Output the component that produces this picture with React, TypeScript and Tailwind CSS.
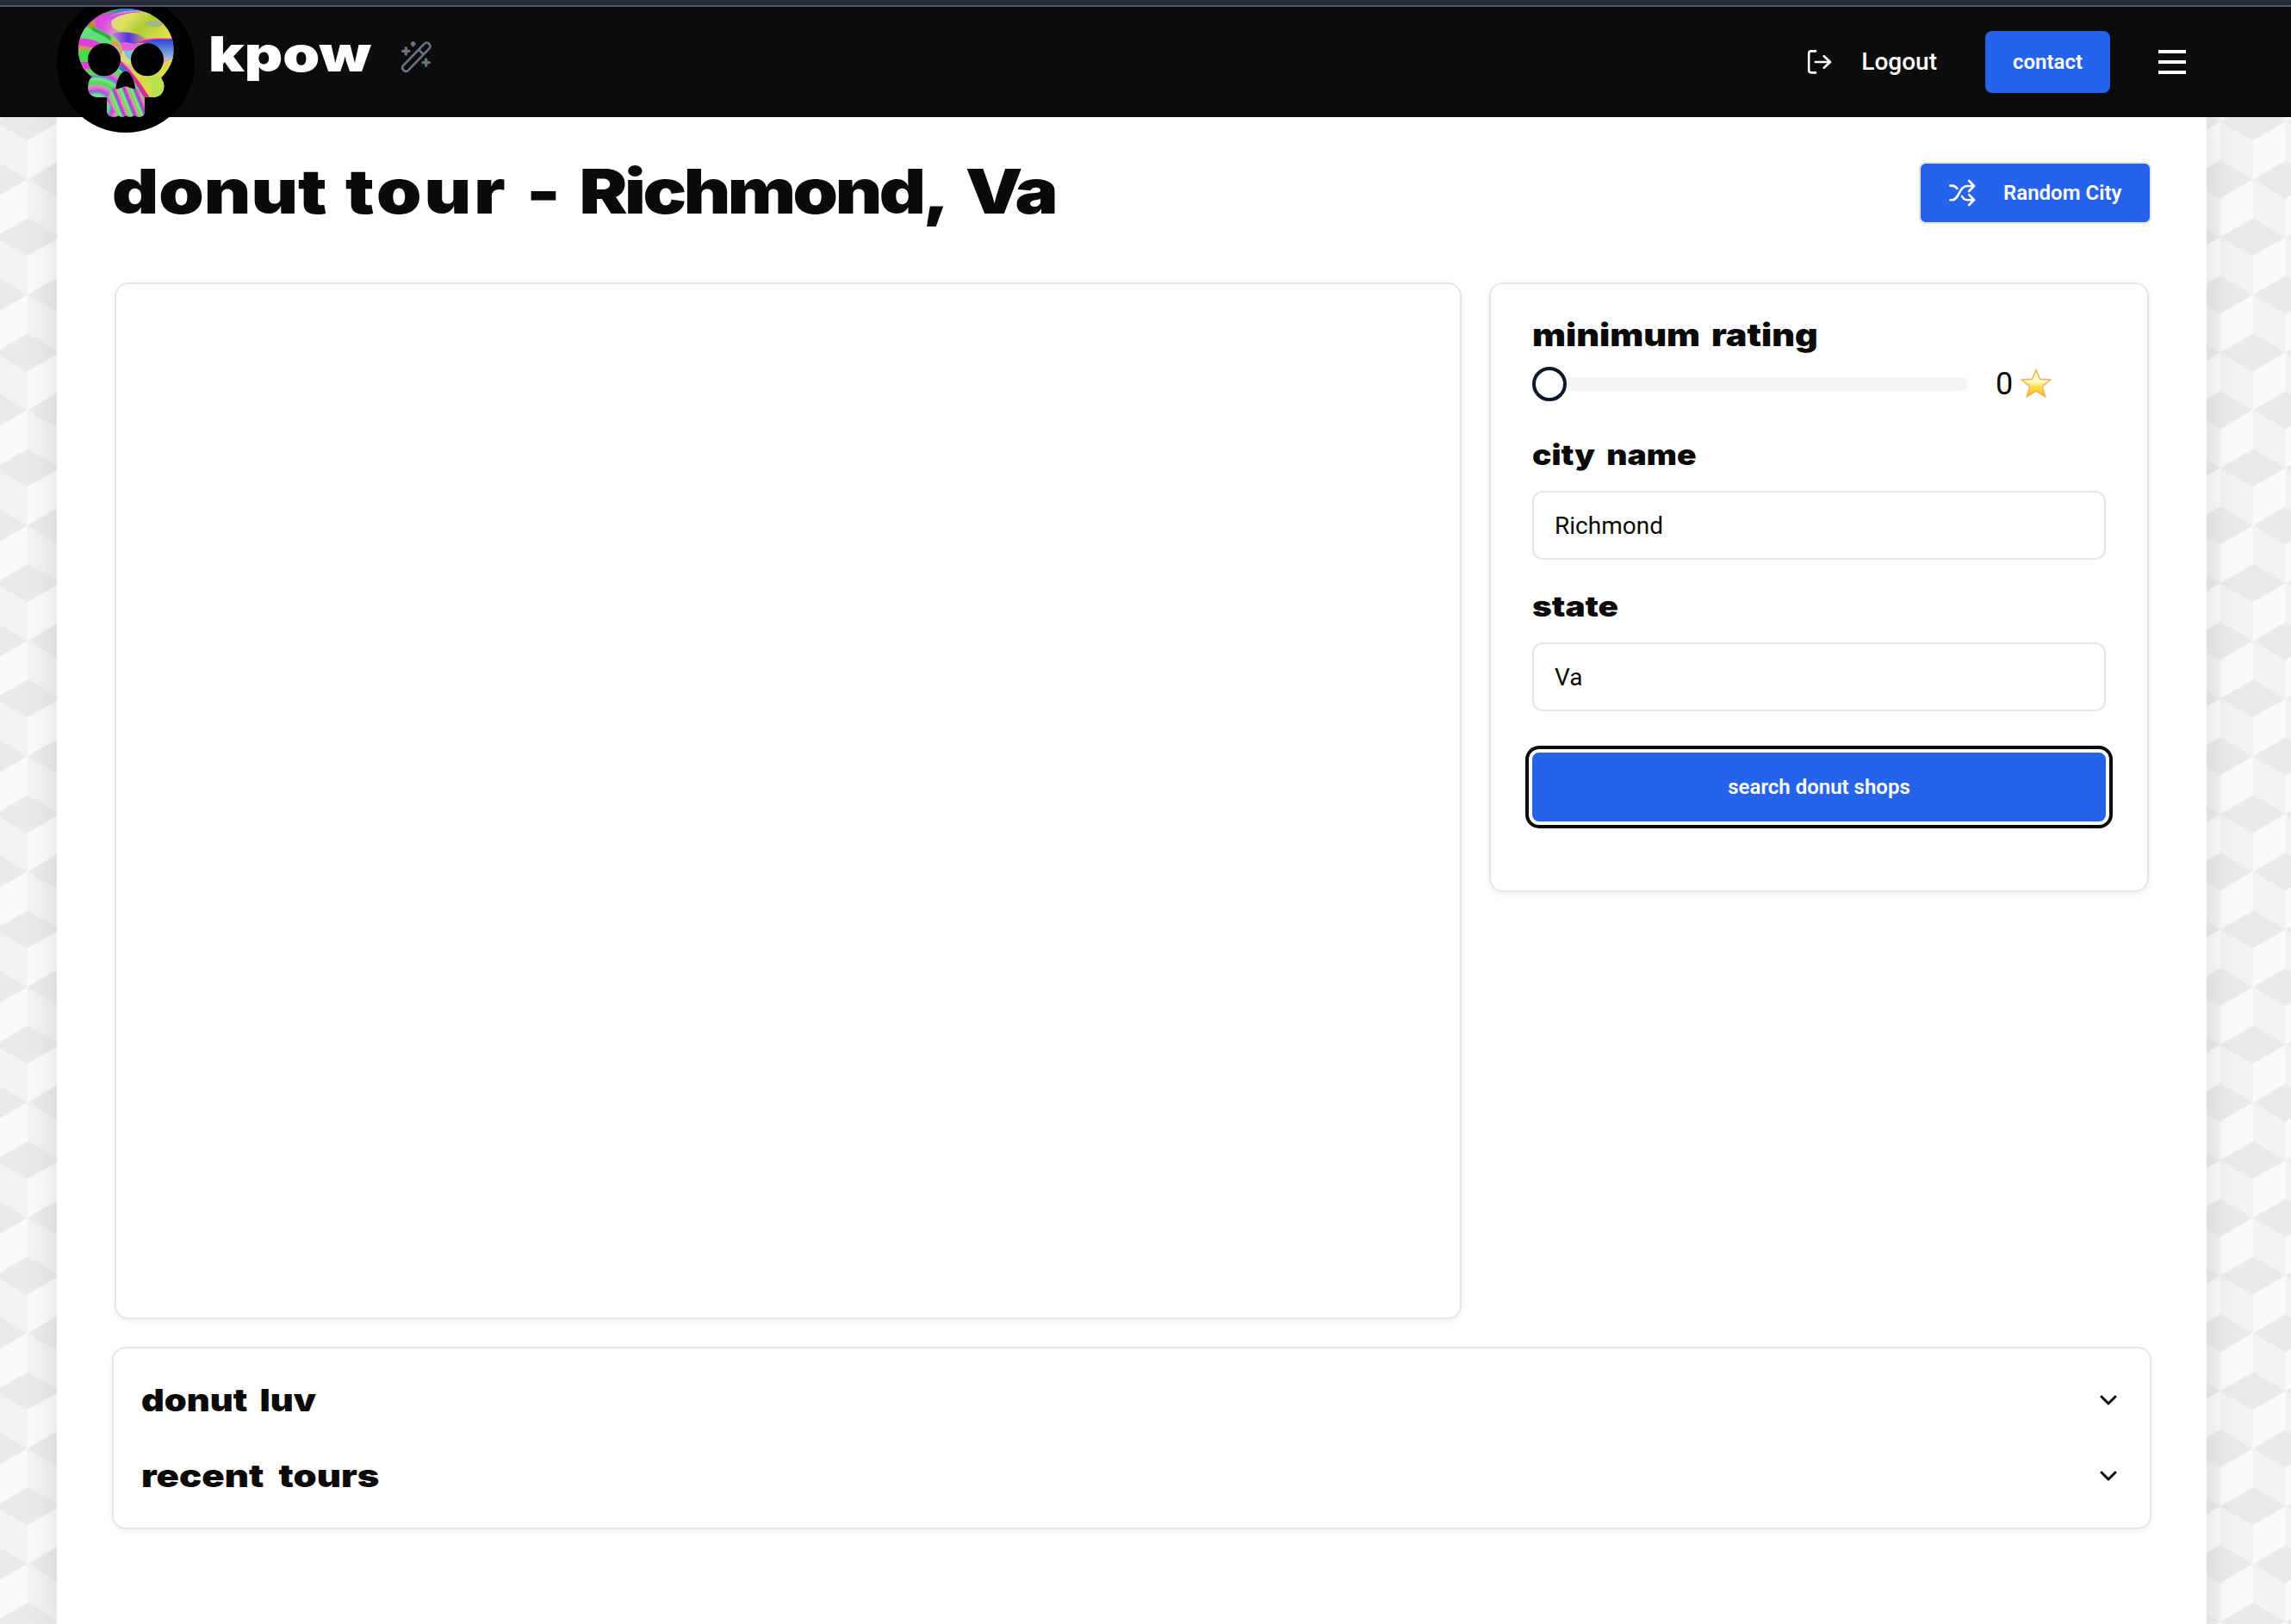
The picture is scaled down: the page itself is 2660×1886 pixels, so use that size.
import type { ReactNode } from "react";
import { ChevronDown } from "lucide-react";

function CubeBackground() {
  return (
    <svg className="absolute inset-0 h-full w-full" aria-hidden="true">
      <defs>
        <pattern id="cubes" x="69.8" y="74.3" width="76" height="134" patternUnits="userSpaceOnUse">
          <rect width="76" height="134" fill="#f2f2f2" />
          <path d="M38 45L76 67L38 89L0 67Z" fill="#eaeaea" />
          <path d="M0 0H38L0 22Z M76 0H38L76 22Z M0 134H38L0 112Z M76 134H38L76 112Z" fill="#eaeaea" />
          <path d="M0 22L38 0V45L0 67Z" fill="#fafafa" />
          <path d="M38 89L76 67V112L38 134Z" fill="#fafafa" />
        </pattern>
      </defs>
      <rect width="100%" height="100%" fill="url(#cubes)" />
    </svg>
  );
}

function SkullLogo() {
  return (
    <svg className="absolute left-0 top-0" width="160" height="146" viewBox="18 24 480 438" aria-label="kpow logo">
      <defs>
        <clipPath id="skull">
          <path d="M258 30C350 30 425 92 425 172C425 215 407 245 381 271C384 280 391 286 391 300C391 324 376 338 356 338H323V390C323 401 316 407 306 407C298 407 293 404 288 401C281 408 266 409 259 402C250 409 240 408 234 402C227 407 220 407 212 407C200 407 193 399 193 388V338H158C138 338 127 322 127 305C127 288 131 276 141 268C112 250 93 218 93 172C93 92 166 30 258 30Z" />
        </clipPath>
        <linearGradient id="lime" x1="0" y1="0" x2="1" y2="0.4">
          <stop offset="0" stopColor="#e9c0b8" />
          <stop offset=".3" stopColor="#dfe060" />
          <stop offset=".6" stopColor="#aecb34" />
          <stop offset="1" stopColor="#dfe04a" />
        </linearGradient>
        <linearGradient id="magenta" gradientUnits="userSpaceOnUse" x1="140" y1="60" x2="230" y2="110">
          <stop offset="0" stopColor="#e33ade" />
          <stop offset=".5" stopColor="#dd50dc" />
          <stop offset="1" stopColor="#d8a0c8" />
        </linearGradient>
        <linearGradient id="sky" x1="0" y1="0" x2="0" y2="1">
          <stop offset="0" stopColor="#2a49dc" />
          <stop offset="1" stopColor="#9cc4d8" />
        </linearGradient>
        <linearGradient id="pool" x1="0" y1="0" x2="1" y2="0">
          <stop offset="0" stopColor="#d88ad0" />
          <stop offset=".5" stopColor="#5432e2" />
          <stop offset="1" stopColor="#cfa080" />
        </linearGradient>
        <linearGradient id="stripes" gradientUnits="userSpaceOnUse" x1="200" y1="360" x2="232" y2="347" spreadMethod="repeat">
          <stop offset="0" stopColor="#d936c6" />
          <stop offset=".3" stopColor="#d4a5b8" />
          <stop offset=".45" stopColor="#58e34a" />
          <stop offset=".65" stopColor="#b8dc7a" />
          <stop offset=".8" stopColor="#2fa6e0" />
          <stop offset="1" stopColor="#e0249c" />
        </linearGradient>
        <radialGradient id="rings" gradientUnits="userSpaceOnUse" cx="155" cy="372" r="56" spreadMethod="repeat">
          <stop offset="0" stopColor="#d63ccb" />
          <stop offset=".3" stopColor="#c89ac8" />
          <stop offset=".5" stopColor="#42e048" />
          <stop offset=".75" stopColor="#8edd86" />
          <stop offset=".88" stopColor="#38b6cf" />
          <stop offset="1" stopColor="#e33ad6" />
        </radialGradient>
      </defs>
      <circle cx="258" cy="222" r="240" fill="#000" />
      <g clipPath="url(#skull)">
        <rect x="80" y="24" width="360" height="390" fill="url(#magenta)" />
        <path d="M90 90L190 45L320 24H200C130 40 100 70 90 120Z" fill="#3fae2c" />
        <path d="M180 58C240 36 290 34 340 42L330 24H260Z" fill="#2f7fe6" />
        <path d="M200 62C250 40 310 34 350 50L240 72Z" fill="#c44ee6" />
        <path d="M207 80C214 46 310 38 372 44L440 90V134C340 130 300 138 262 122C230 108 205 98 207 80Z" fill="url(#lime)" />
        <ellipse cx="358" cy="83" rx="28" ry="11" fill="#a3b785" />
        <path d="M85 130C100 92 125 88 150 95C175 110 206 115 212 150L180 165L85 135Z" fill="#5fe07a" />
        <path d="M120 92L150 68L154 88L135 100Z" fill="#b5942e" />
        <path d="M140 97C160 112 190 118 210 140" fill="none" stroke="#2fae3b" strokeWidth="12" />
        <path d="M85 134C120 130 170 142 190 165L85 172Z" fill="#e23edc" />
        <path d="M85 160C110 160 140 162 160 172L85 192Z" fill="#c69a58" />
        <path d="M85 180L140 174L125 216L95 214Z" fill="#3fe04b" />
        <path d="M205 118C240 105 300 112 330 136C300 160 262 158 240 150Z" fill="url(#pool)" />
        <path d="M240 150C262 140 280 158 310 152L280 176L246 178Z" fill="#dd62d8" />
        <path d="M300 150C330 128 380 136 430 134V150H300Z" fill="#e0298f" />
        <path d="M325 148C350 134 390 140 430 138V208C400 206 350 190 325 148Z" fill="url(#sky)" />
        <path d="M206 120C240 140 250 170 246 215L230 158L206 150Z" fill="#7fd860" />
        <path d="M214 138C240 155 252 175 246 215L236 168L208 152Z" fill="#e09a48" />
        <path d="M246 176L282 178L276 232L240 212Z" fill="#dfd97a" />
        <path d="M250 176L282 178L276 212L258 196Z" fill="#7cc4de" />
        <path d="M268 222C320 260 400 220 430 196V350H340C320 310 290 270 268 222Z" fill="#dcd84e" />
        <path d="M330 272C360 262 380 262 400 280V345H352C350 310 345 290 330 272Z" fill="#b8e34c" />
        <path d="M122 262C190 262 225 262 245 212L262 240L330 345V412H190V345H122Z" fill="url(#rings)" />
        <path d="M215 306C235 288 290 296 306 320L330 345V412H240L190 345Z" fill="url(#stripes)" />
        <path d="M240 212C290 260 310 290 342 340H322C300 300 270 255 240 225Z" fill="#dc2b8c" />
        <path d="M240 222L285 272L262 262L234 240Z" fill="#3670df" />
        <path d="M104 216H124L134 244L118 240Z" fill="#df3dd8" />
        <path d="M116 244L134 240L160 262H140Z" fill="#4be04b" />
      </g>
      <circle cx="183" cy="208" r="57" fill="#000" />
      <circle cx="333" cy="208" r="57" fill="#000" />
      <path d="M257 248C275 248 290 285 292 310C274 309 268 302 257 301C246 302 240 310 223 310C226 280 240 248 257 248Z" fill="#000" />
    </svg>
  );
}

function WandIcon() {
  return (
    <svg width="70" height="60" viewBox="0 0 210 180" fill="none" stroke="#6b7080" strokeWidth="8" strokeLinejoin="round" strokeLinecap="round">
      <rect x="36" y="78.5" width="127" height="24" rx="10" transform="rotate(-46 100 90)" />
      <path d="M108 65L124 81" />
      <path d="M64 59V81M53 70H75M134 99V121M123 110H145" strokeWidth="10" />
      <path d="M89 40L94 45L89 50L84 45Z" strokeWidth="9" />
    </svg>
  );
}

function LogoutIcon() {
  return (
    <svg width="32" height="32" viewBox="0 0 32 32" fill="none" stroke="#fff" strokeWidth="2.6" strokeLinecap="round" strokeLinejoin="round">
      <path d="M11 3.4H6C4.3 3.4 3.2 4.5 3.2 6V25.6C3.2 27.2 4.3 28.4 6 28.4H11" />
      <path d="M10.8 16H28M20.8 9.2L28 16L20.8 22.8" />
    </svg>
  );
}

function ShuffleIcon() {
  return (
    <svg width="32" height="32" viewBox="0 0 32 32" fill="none" stroke="#fff" strokeWidth="2.6" strokeLinecap="round" strokeLinejoin="round">
      <path d="M2.4 7.6H4.5C7 7.6 8.8 8.8 10.4 11" />
      <path d="M2.4 24.2H4.5C13 24.2 12.5 8 22 8H30" />
      <path d="M16 20C17.6 23 19.5 24.2 22 24.2H30" />
      <path d="M24.2 2L30 8L24.2 14M24.2 18.2L30 24.2L24.2 30" />
    </svg>
  );
}

function StarIcon() {
  return (
    <svg width="36" height="34" viewBox="0 0 36 34">
      <defs>
        <linearGradient id="gold" x1="0" y1="0" x2="0" y2="1">
          <stop offset="0" stopColor="#fff2a8" />
          <stop offset=".45" stopColor="#fffbc8" />
          <stop offset=".6" stopColor="#ffe45c" />
          <stop offset="1" stopColor="#f9ae05" />
        </linearGradient>
      </defs>
      <path d="M18 1L22.4 12.2L35 13L25.4 20.6L28.8 33L18 26.2L7.2 33L10.6 20.6L1 13L13.6 12.2Z" fill="url(#gold)" stroke="#efb25a" strokeWidth="1.4" strokeLinejoin="round" />
    </svg>
  );
}

const card = "rounded-2xl border-2 border-[#e5e5e5] bg-white shadow-[0_2px_6px_rgba(0,0,0,0.07)]";
const display = "inline-block origin-left whitespace-nowrap font-['Inter',sans-serif] font-black text-[#0c0a09]";

function Field({ label, value, className }: { label: ReactNode; value: string; className: string }) {
  return (
    <div className={className}>
      <label className="block h-8 pt-[3px]">{label}</label>
      <input
        className="mt-7 block h-20 w-full rounded-xl border-2 border-[#e5e5e5] bg-white px-6 text-[28px] text-[#0c0a09]"
        defaultValue={value}
      />
    </div>
  );
}

function Section({ children }: { children: ReactNode }) {
  return (
    <div className="flex h-[88px] items-center justify-between">
      <div>{children}</div>
      <ChevronDown size={32} strokeWidth={2.2} color="#000" />
    </div>
  );
}

export default function App() {
  return (
    <div className="relative h-[1886px] w-[2660px] overflow-hidden font-['Roboto',sans-serif]">
      <CubeBackground />
      <div className="relative flex h-full flex-col">
        <div className="h-2 shrink-0 border-b-2 border-[#50566b] bg-[#282c34]" />
        <header className="relative z-10 flex h-32 shrink-0 items-center bg-[#0c0c0c] pl-[66px] pr-[122px]">
          <div className="relative h-32 w-[176px]">
            <SkullLogo />
          </div>
          <div className="w-[208px] pb-[18px]">
            <span className="inline-block origin-left scale-x-[1.23] whitespace-nowrap font-['Inter',sans-serif] text-[56px] font-black leading-[60px] text-white">kpow</span>
          </div>
          <div className="pb-3">
            <WandIcon />
          </div>
          <nav className="ml-auto flex items-center gap-14">
            <a className="flex items-center gap-8 text-[28px] font-medium text-white">
              <LogoutIcon />
              Logout
            </a>
            <button className="h-[72px] w-[145px] rounded-lg bg-[#2563eb] text-2xl font-semibold text-white">contact</button>
            <button className="flex w-8 flex-col gap-2" aria-label="Menu">
              <span className="h-1 w-full bg-white" />
              <span className="h-1 w-full bg-white" />
              <span className="h-1 w-full bg-white" />
            </button>
          </nav>
        </header>
        <main className="ml-[66px] w-[2496px] flex-1 bg-white px-16 pt-[52px] shadow-[0_0_36px_rgba(0,0,0,0.11)]">
          <div className="flex h-[72px] items-start justify-between">
            <h1 className={display + " scale-x-[1.168] text-[72px] leading-[68px] [word-spacing:4px]"}>
              donut <span className="tracking-[2.6px]">tour</span> - <span className="tracking-[-3px]">Richmond,</span>{" "}
              <span className="tracking-[-3px]">Va</span>
            </h1>
            <button className="flex h-[72px] w-[270px] items-center gap-8 rounded-lg border-2 border-[#e5e5e5] bg-[#2563eb] pl-8 text-2xl font-semibold text-white">
              <ShuffleIcon />
              Random City
            </button>
          </div>
          <div className="mt-[68px] flex items-start gap-8 px-[3px]">
            <section className={card + " h-[1204px] w-[1564px]"} />
            <section className={card + " h-[708px] w-[766px] px-12 pt-[38px]"}>
              <h2 className="h-10 pt-px">
                <span className={display + " scale-x-[1.148] text-[36px] leading-[40px] [word-spacing:4px]"}>minimum rating</span>
              </h2>
              <div className="mt-[18px] flex h-10 items-center">
                <div className="flex h-4 w-[506px] items-center rounded-full bg-[#f5f5f4]">
                  <span className="h-10 w-10 rounded-full border-4 border-[#0f172a] bg-white" />
                </div>
                <span className="ml-8 text-[36px] leading-10 text-[#0c0a09]">0</span>
                <span className="ml-[9px] pb-0.5">
                  <StarIcon />
                </span>
              </div>
              <Field
                className="mt-11"
                label={<span className={display + " scale-x-[1.165] text-[32px] leading-8 [word-spacing:5px]"}>city name</span>}
                value="Richmond"
              />
              <Field
                className="mt-9"
                label={<span className={display + " scale-x-[1.21] text-[32px] leading-8"}>state</span>}
                value="Va"
              />
              <button className="mt-12 block h-20 w-full rounded-lg bg-[#2563eb] text-2xl font-semibold text-white ring-4 ring-[#0c0a09] ring-offset-4 ring-offset-white">
                search donut shops
              </button>
            </section>
          </div>
          <section className={card + " mt-8 px-8 py-4"}>
            <Section>
              <span className={display + " scale-x-[1.155] text-[36px] leading-[44px] [word-spacing:5px]"}>donut luv</span>
            </Section>
            <Section>
              <span className={display + " scale-x-[1.21] text-[36px] leading-[44px] [word-spacing:7px]"}>recent tours</span>
            </Section>
          </section>
        </main>
      </div>
    </div>
  );
}
